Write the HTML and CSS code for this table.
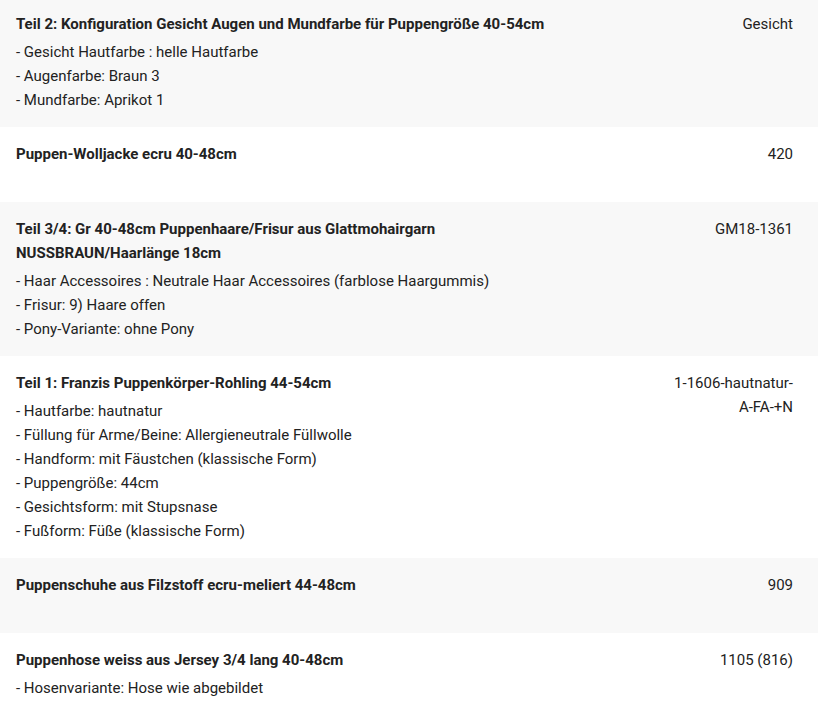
FILE: index.html
```html
<!DOCTYPE html>
<html lang="de">
<head>
<meta charset="utf-8">
<title>Warenkorb</title>
<link rel="stylesheet" href="styles.css">
</head>
<body>
<div class="items">
  <div class="item alt">
    <div class="info">
      <div class="title">Teil 2: Konfiguration Gesicht Augen und Mundfarbe für Puppengröße 40-54cm</div>
      <ul class="opts">
        <li>- Gesicht Hautfarbe : helle Hautfarbe</li>
        <li>- Augenfarbe: Braun 3</li>
        <li>- Mundfarbe: Aprikot 1</li>
      </ul>
    </div>
    <div class="sku">Gesicht</div>
  </div>
  <div class="item short">
    <div class="info">
      <div class="title">Puppen-Wolljacke ecru 40-48cm</div>
    </div>
    <div class="sku">420</div>
  </div>
  <div class="item alt">
    <div class="info">
      <div class="title">Teil 3/4: Gr 40-48cm Puppenhaare/Frisur aus Glattmohairgarn NUSSBRAUN/Haarlänge 18cm</div>
      <ul class="opts">
        <li>- Haar Accessoires : Neutrale Haar Accessoires (farblose Haargummis)</li>
        <li>- Frisur: 9) Haare offen</li>
        <li>- Pony-Variante: ohne Pony</li>
      </ul>
    </div>
    <div class="sku">GM18-1361</div>
  </div>
  <div class="item">
    <div class="info">
      <div class="title">Teil 1: Franzis Puppenkörper-Rohling 44-54cm</div>
      <ul class="opts">
        <li>- Hautfarbe: hautnatur</li>
        <li>- Füllung für Arme/Beine: Allergieneutrale Füllwolle</li>
        <li>- Handform: mit Fäustchen (klassische Form)</li>
        <li>- Puppengröße: 44cm</li>
        <li>- Gesichtsform: mit Stupsnase</li>
        <li>- Fußform: Füße (klassische Form)</li>
      </ul>
    </div>
    <div class="sku">1-1606-hautnatur-A-FA-+N</div>
  </div>
  <div class="item alt short">
    <div class="info">
      <div class="title">Puppenschuhe aus Filzstoff ecru-meliert 44-48cm</div>
    </div>
    <div class="sku">909</div>
  </div>
  <div class="item short">
    <div class="info">
      <div class="title">Puppenhose weiss aus Jersey 3/4 lang 40-48cm</div>
      <ul class="opts">
        <li>- Hosenvariante: Hose wie abgebildet</li>
      </ul>
    </div>
    <div class="sku">1105 (816)</div>
  </div>
</div>
</body>
</html>
```

FILE: styles.css
```css
* { box-sizing: border-box; }
html, body {
  margin: 0;
  padding: 0;
  background: #ffffff;
}
body {
  font-family: Roboto, "Liberation Sans", Arial, sans-serif;
  font-size: 15px;
  line-height: 24px;
  color: #222222;
}
.items {
  margin-top: -3px;
}
.item {
  display: grid;
  grid-template-columns: 1fr 125px;
  column-gap: 97px;
  padding: 15px 25px 15px 16px;
  background: #ffffff;
}
.item.alt {
  background: #f8f8f8;
}
.item.short {
  min-height: 75px;
}
.title {
  font-weight: 700;
}
.opts {
  list-style: none;
  margin: 4px 0 0 0;
  padding: 0;
}
.sku {
  text-align: right;
  overflow-wrap: break-word;
}
```
